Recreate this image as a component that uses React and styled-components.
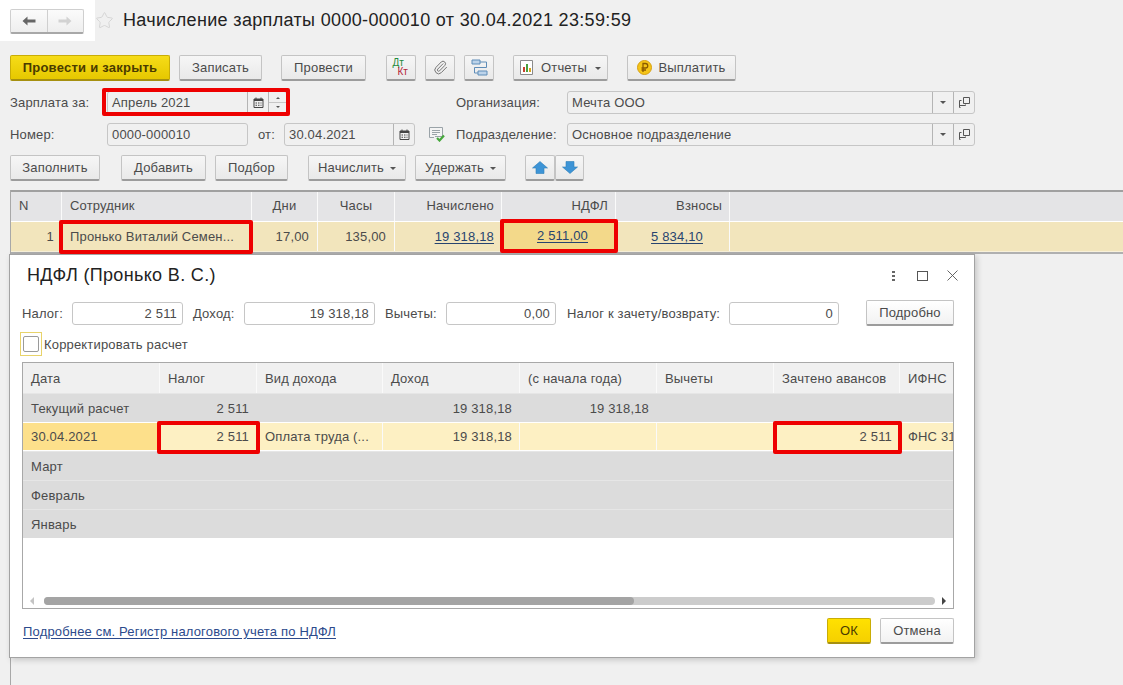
import React from 'react'
import styled, { createGlobalStyle, css } from 'styled-components'
import { Paperclip, Star } from 'lucide-react'

const Global = createGlobalStyle`
  html, body { margin: 0; padding: 0; height: 100%; background: #f0f0f0; overflow: hidden; }
  #root { height: 100%; }
  * { box-sizing: border-box; }
`

const redFrame = css`
  position: relative;
  &::after {
    content: '';
    position: absolute;
    top: ${p => p.$frame[0]}px;
    right: ${p => p.$frame[1]}px;
    bottom: ${p => p.$frame[2]}px;
    left: ${p => p.$frame[3]}px;
    border: 4px solid #ee0000;
    border-radius: 2px;
    pointer-events: none;
    z-index: 3;
  }
`

const Page = styled.div`
  position: relative;
  width: 1123px;
  height: 685px;
  display: flex;
  flex-direction: column;
  background: #f0f0f0;
  font-family: "Liberation Sans", Arial, sans-serif;
  font-size: 13px;
  letter-spacing: 0.17px;
  color: #4b4b4b;
  overflow: hidden;
`

const Head = styled.div`
  height: 41px;
  display: flex;
  align-items: center;
  margin-bottom: 14px;
`

const NavPatch = styled.div`
  width: 95px;
  height: 41px;
  background: #fff;
  padding: 9px 0 0 10px;
  flex: none;
`

const NavGroup = styled.div`
  display: flex;
  width: 74px;
  height: 25px;
  border: 1px solid #cfcfcf;
  border-bottom: 2px solid #a8a8a8;
  border-radius: 2px;
  background: linear-gradient(#fbfbfb, #eeeeee);
`

const NavBtn = styled.div`
  flex: 1;
  display: flex;
  align-items: center;
  justify-content: center;
  & + & { border-left: 1px solid #cfcfcf; }
`

const Title = styled.div`
  font-size: 18px;
  letter-spacing: 0.34px;
  color: #222;
  margin-left: 9px;
  margin-top: -1px;
`

const Toolbar = styled.div`
  display: flex;
  align-items: flex-start;
  padding-left: 10px;
  height: 26px;
  margin-top: ${p => p.$mt || 0}px;
`

const Btn = styled.div`
  width: ${p => p.$w}px;
  height: 26px;
  margin-left: ${p => p.$ml || 0}px;
  flex: none;
  display: flex;
  align-items: center;
  justify-content: center;
  gap: ${p => p.$gap || 0}px;
  padding-bottom: 1px;
  white-space: nowrap;
  border: 1px solid #c4c4c4;
  border-bottom: 2px solid #9c9c9c;
  border-radius: 2px;
  background: linear-gradient(#f6f6f6, #e9e9e9);
`

const PrimaryBtn = styled(Btn)`
  font-weight: 700;
  color: #4a3b00;
  letter-spacing: 0.24px;
  border: 1px solid #c9ad06;
  border-bottom: 2px solid #a69010;
  background: linear-gradient(#f6dc18, #e6c800);
`

const WhiteBtn = styled(Btn)`
  background: linear-gradient(#ffffff, #f2f2f2);
`

const OkBtn = styled(Btn)`
  color: #4a3b00;
  border: 1px solid #c9ad06;
  border-bottom: 2px solid #a69010;
  background: linear-gradient(#ffe100, #f5d000);
`

const FormRow = styled.div`
  display: flex;
  align-items: center;
  height: 22px;
  padding-left: 10px;
  margin-top: ${p => p.$mt || 0}px;
`

const Label = styled.div`
  width: ${p => p.$w}px;
  margin-left: ${p => p.$ml || 0}px;
  flex: none;
  white-space: nowrap;
`

const Field = styled.div`
  width: ${p => p.$w}px;
  height: 23px;
  flex: none;
  display: flex;
  align-items: stretch;
  border: 1px solid #c6c6c6;
  border-radius: 3px;
  background: ${p => (p.$white ? '#fff' : 'transparent')};
  ${p => p.$frame && redFrame}
`

const FieldText = styled.div`
  flex: 1;
  min-width: 0;
  padding: 0 ${p => (p.$right ? 5 : 4)}px;
  line-height: 21px;
  white-space: nowrap;
  text-align: ${p => (p.$right ? 'right' : 'left')};
`

const FieldBtn = styled.div`
  width: ${p => p.$w || 21}px;
  flex: none;
  display: flex;
  align-items: center;
  justify-content: center;
  border-left: 1px solid #b4b4b4;
`

const SpinBtn = styled(FieldBtn)`
  flex-direction: column;
  gap: 3px;
  width: 18px;
`

const SpinLine = styled.span`
  width: 100%;
  height: 1px;
  background: #c6c6c6;
`

const Caret = styled.span`
  width: 0;
  height: 0;
  border-left: 3px solid transparent;
  border-right: 3px solid transparent;
  border-${p => (p.$up ? 'bottom' : 'top')}: 3px solid #555;
`

const SpinCaret = styled(Caret)`
  border-left-width: 2px;
  border-right-width: 2px;
  border-${p => (p.$up ? 'bottom' : 'top')}-width: 2px;
`

const BtnCaret = styled(Caret)`
  margin-top: 2px;
`

const DocIcon = styled.div`
  width: 16px;
  margin: 0 11px 0 14px;
  flex: none;
  display: flex;
`

const Grid = styled.div`
  display: grid;
  grid-template-columns: ${p => p.$cols};
`

const Doc = styled.div`
  flex: 1;
  margin: 9px 0 0 10px;
  border-left: 1px solid #a8a8a8;
`

const DocTable = styled.div`
  border-top: 2px solid #a0a0a0;
  border-bottom: 2px solid #b0b0b0;
`

const DocHead = styled(Grid)`
  height: 30px;
  background: #e4e4e6;
  border-bottom: 1px solid #fff;
  & > div { padding-bottom: 2px; }
`

const DocRow = styled(Grid)`
  height: 30px;
  background: #f2e5bc;
  border-bottom: 1px solid #f8f1da;
  & > div { padding-bottom: 1px; }
`

const Cell = styled.div`
  display: flex;
  align-items: center;
  justify-content: ${p => (p.$center ? 'center' : p.$right ? 'flex-end' : 'flex-start')};
  padding-left: ${p => (p.$right || p.$center ? 0 : 8)}px;
  padding-right: ${p => (p.$center ? 0 : p.$pr || 7)}px;
  white-space: nowrap;
  overflow: ${p => (p.$frame ? 'visible' : 'hidden')};
  border-right: ${p => (p.$last ? 0 : '1px solid')} ${p => p.$line || '#fafafa'};
  ${p => p.$frame && redFrame}
`

const ActiveCell = styled(Cell)`
  background: #f3d98a;
  border-bottom: 2px solid #eeb544;
`

const DataLink = styled.span`
  color: #27446f;
  text-decoration: underline;
  text-underline-offset: 2px;
`

const Dialog = styled.div`
  position: absolute;
  z-index: 2;
  left: 9px;
  top: 254px;
  width: 966px;
  height: 404px;
  display: flex;
  flex-direction: column;
  background: #fff;
  border: 1px solid #a3a3a3;
  box-shadow: 2px 2px 6px rgba(0, 0, 0, 0.18);
`

const DialogHead = styled.div`
  height: 45px;
  display: flex;
  align-items: center;
  padding: 0 16px 0 17px;
`

const DialogTitle = styled.div`
  flex: 1;
  font-size: 18px;
  letter-spacing: 0.34px;
  color: #222;
  margin-top: -4px;
`

const WindowIcons = styled.div`
  display: flex;
  align-items: center;
  margin-top: -4px;
`

const MoreIcon = styled.div`
  display: flex;
  flex-direction: column;
  gap: 2px;
  margin-right: 22px;
  & > i { width: 3px; height: 2px; background: #666; display: block; }
`

const MaxIcon = styled.div`
  width: 11px;
  height: 10px;
  border: 1px solid #555;
  margin-right: 19px;
`

const DialogRow = styled.div`
  display: flex;
  align-items: center;
  height: 26px;
  padding-left: 12px;
`

const CheckRow = styled.div`
  display: flex;
  align-items: center;
  height: 24px;
  margin: 6px 0 0 10px;
`

const CheckFocus = styled.div`
  width: 22px;
  height: 24px;
  border: 1px solid #e8d36a;
  padding: 3px 2px;
  margin-right: 2px;
`

const CheckBox = styled.div`
  width: 16px;
  height: 16px;
  border: 1px solid #9a9a9a;
  border-radius: 2px;
  background: #fff;
`

const SubTable = styled.div`
  margin: 6px 20px 0 12px;
  height: 247px;
  display: flex;
  flex-direction: column;
  border: 1px solid #a8a8a8;
`

const SubHead = styled(Grid)`
  height: 30px;
  background: #f0f0f0;
`

const SubRow = styled(Grid)`
  height: 29px;
  background: ${p => (p.$active ? '#fdf0c3' : '#dcdcdc')};
  border-top: 1px solid ${p => (p.$active ? '#fff' : '#e6e6e6')};
  border-bottom: ${p => (p.$active ? '1px solid #fff' : 0)};
`

const FirstCell = styled(Cell)`
  background: #fde08b;
`

const ScrollBar = styled.div`
  margin-top: auto;
  height: 14px;
  display: flex;
  align-items: center;
  padding: 0 7px;
`

const ScrollArrow = styled.span`
  width: 0;
  height: 0;
  border-top: 4px solid transparent;
  border-bottom: 4px solid transparent;
  ${p => (p.$left ? 'border-right: 4px solid #c4c4c4;' : 'border-left: 4px solid #444;')}
`

const ScrollTrack = styled.div`
  flex: 1;
  height: 8px;
  margin: 0 7px 0 10px;
  border-radius: 4px;
  background: #cccccc;
  display: flex;
`

const ScrollThumb = styled.div`
  width: 590px;
  border-radius: 4px;
  background: #a4a4a4;
`

const DialogFoot = styled.div`
  flex: 1;
  display: flex;
  align-items: flex-start;
  padding: 9px 20px 0 13px;
`

const FootLink = styled.div`
  flex: 1;
  margin-top: 6px;
  color: #2c4a8c;
  text-decoration: underline;
  text-underline-offset: 2px;
`

const DtKt = styled.span`
  width: 17px;
  height: 18px;
  font-size: 10px;
  letter-spacing: 0;
  line-height: 9px;
  color: #1f8a3d;
  & > b {
    display: block;
    margin-left: 5px;
    color: #b5263a;
    font-weight: 400;
  }
`

const BackIcon = ({ color, flip }) => (
  <svg width="14" height="10" viewBox="0 0 14 10" style={{ transform: flip ? 'scaleX(-1)' : 'none' }}>
    <path d="M0.5 5 L5.5 0.5 V3.5 H13.5 V6.5 H5.5 V9.5 Z" fill={color} />
  </svg>
)

const CloseIcon = () => (
  <svg width="11" height="11" viewBox="0 0 11 11">
    <path d="M0.5 0.5 L10.5 10.5 M10.5 0.5 L0.5 10.5" stroke="#555" strokeWidth="0.9" />
  </svg>
)

const CalendarIcon = () => (
  <svg width="11" height="11" viewBox="0 0 11 11">
    <path d="M1 2 H10 V10.5 H1 Z" fill="none" stroke="#444" />
    <path d="M1 2 H10 V4 H1 Z" fill="#444" />
    <path d="M3 0.5 V2.5 M8 0.5 V2.5" stroke="#444" />
    <path d="M2.5 5.5 h1.5 v1 h-1.5 z M5 5.5 h1.5 v1 h-1.5 z M7.5 5.5 h1 v1 h-1 z M2.5 7.8 h1.5 v1 h-1.5 z M5 7.8 h1.5 v1 h-1.5 z M7.5 7.8 h1 v1 h-1 z" fill="#444" />
  </svg>
)

const OpenIcon = () => (
  <svg width="11" height="11" viewBox="0 0 11 11">
    <path d="M4.5 0.5 H10.5 V6.5 H4.5 Z" fill="none" stroke="#555" />
    <path d="M2.5 3.5 H0.5 V10.5 H1.5 M0.5 8.5 H6.5 V7.5" fill="none" stroke="#555" />
  </svg>
)

const StructureIcon = () => (
  <svg width="17" height="17" viewBox="0 0 17 17">
    <path d="M9 3 H15.5 V8.5 H3.5 V14 H7" fill="none" stroke="#5f8db8" />
    <path d="M1 1 H9 V5 H1 Z M7 12 H16 V16 H7 Z" fill="#bcd3ea" stroke="#5f8db8" />
  </svg>
)

const ReportIcon = () => (
  <svg width="13" height="15" viewBox="0 0 13 15">
    <path d="M0.5 0.5 H12.5 V14.5 H0.5 Z" fill="#fff" stroke="#8a8a8a" />
    <path d="M3 7 h2 v5 h-2 z" fill="#c8402f" />
    <path d="M6 4 h2 v8 h-2 z" fill="#4aa03f" />
    <path d="M9 8 h2 v4 h-2 z" fill="#d9a520" />
  </svg>
)

const CoinIcon = () => (
  <svg width="15" height="15" viewBox="0 0 15 15">
    <circle cx="7.5" cy="7.5" r="7" fill="#f5c518" stroke="#d69f10" />
    <path d="M6 12 V3.5 H8.5 A2.2 2.2 0 0 1 8.5 8 H4.5 M4.5 10 H9" fill="none" stroke="#8a5a00" strokeWidth="1.3" />
  </svg>
)

const DocCheckIcon = () => (
  <svg width="16" height="16" viewBox="0 0 16 16">
    <path d="M0.5 1.5 H13.5 V10.5 H6 M0.5 1.5 V11.5 H5" fill="#f4f4f4" stroke="#9aa3a8" />
    <path d="M3 4.5 H11 M3 6.5 H11 M3 8.5 H8" stroke="#9aa3a8" />
    <path d="M8 12 L10.5 14.5 L15 9.5" fill="none" stroke="#46a83c" strokeWidth="2.2" />
  </svg>
)

const BlueArrow = ({ down }) => (
  <svg width="16" height="13" viewBox="0 0 16 13" style={{ transform: down ? 'scaleY(-1)' : 'none' }}>
    <path d="M8 0.5 L15.5 7 H12 V12.5 H4 V7 H0.5 Z" fill="#3d94d6" stroke="#2f7fb8" strokeWidth="0.6" />
  </svg>
)

const docCols = '51px 190px 66px 77px 107px 114px 114px 1fr'
const subCols = '137px 97px 126px 137px 137px 117px 126px 1fr'

export default function App() {
  return (
    <Page>
      <Global />
      <Head>
        <NavPatch>
          <NavGroup>
            <NavBtn><BackIcon color="#666" /></NavBtn>
            <NavBtn><BackIcon color="#d2d2d2" flip /></NavBtn>
          </NavGroup>
        </NavPatch>
        <Star size={19} color="#d4d4d4" strokeWidth={1.2} />
        <Title>Начисление зарплаты 0000-000010 от 30.04.2021 23:59:59</Title>
      </Head>

      <Toolbar>
        <PrimaryBtn $w={160}>Провести и закрыть</PrimaryBtn>
        <Btn $w={83} $ml={9}>Записать</Btn>
        <Btn $w={85} $ml={19}>Провести</Btn>
        <Btn $w={30} $ml={20}><DtKt>Дт<b>Кт</b></DtKt></Btn>
        <Btn $w={30} $ml={9}><Paperclip size={15} color="#777" strokeWidth={1.6} /></Btn>
        <Btn $w={30} $ml={9}><StructureIcon /></Btn>
        <Btn $w={95} $ml={19} $gap={8}><ReportIcon />Отчеты<BtnCaret /></Btn>
        <Btn $w={109} $ml={19} $gap={6}><CoinIcon />Выплатить</Btn>
      </Toolbar>

      <FormRow $mt={10}>
        <Label $w={97}>Зарплата за:</Label>
        <Field $w={180} $frame={[-4, -4, -3, -6]}>
          <FieldText>Апрель 2021</FieldText>
          <FieldBtn><CalendarIcon /></FieldBtn>
          <SpinBtn><SpinCaret $up /><SpinLine /><SpinCaret /></SpinBtn>
        </Field>
        <Label $w={111} $ml={169}>Организация:</Label>
        <Field $w={408}>
          <FieldText>Мечта ООО</FieldText>
          <FieldBtn><Caret /></FieldBtn>
          <FieldBtn><OpenIcon /></FieldBtn>
        </Field>
      </FormRow>

      <FormRow $mt={10}>
        <Label $w={97}>Номер:</Label>
        <Field $w={141}><FieldText>0000-000010</FieldText></Field>
        <Label $w={26} $ml={10}>от:</Label>
        <Field $w={131}>
          <FieldText>30.04.2021</FieldText>
          <FieldBtn><CalendarIcon /></FieldBtn>
        </Field>
        <DocIcon><DocCheckIcon /></DocIcon>
        <Label $w={111}>Подразделение:</Label>
        <Field $w={408}>
          <FieldText>Основное подразделение</FieldText>
          <FieldBtn><Caret /></FieldBtn>
          <FieldBtn><OpenIcon /></FieldBtn>
        </Field>
      </FormRow>

      <Toolbar $mt={10}>
        <Btn $w={90}>Заполнить</Btn>
        <Btn $w={85} $ml={21}>Добавить</Btn>
        <Btn $w={73} $ml={9}>Подбор</Btn>
        <Btn $w={98} $ml={20} $gap={6}>Начислить<BtnCaret /></Btn>
        <Btn $w={91} $ml={9} $gap={6}>Удержать<BtnCaret /></Btn>
        <Btn $w={30} $ml={19}><BlueArrow /></Btn>
        <Btn $w={29}><BlueArrow down /></Btn>
      </Toolbar>

      <Doc>
        <DocTable>
          <DocHead $cols={docCols}>
            <Cell>N</Cell>
            <Cell>Сотрудник</Cell>
            <Cell $center>Дни</Cell>
            <Cell $center>Часы</Cell>
            <Cell $right>Начислено</Cell>
            <Cell $right>НДФЛ</Cell>
            <Cell $right>Взносы</Cell>
            <Cell $last />
          </DocHead>
          <DocRow $cols={docCols}>
            <Cell $right>1</Cell>
            <Cell $frame={[-2, -2, -3, -3]}>Пронько Виталий Семен...</Cell>
            <Cell $right $pr={8}>17,00</Cell>
            <Cell $right $pr={8}>135,00</Cell>
            <Cell $right><DataLink>19 318,18</DataLink></Cell>
            <ActiveCell $right $pr={27} $frame={[-3, -3, -4, -2]}><DataLink>2 511,00</DataLink></ActiveCell>
            <Cell $right $pr={26}><DataLink>5 834,10</DataLink></Cell>
            <Cell $last />
          </DocRow>
        </DocTable>
      </Doc>

      <Dialog>
        <DialogHead>
          <DialogTitle>НДФЛ (Пронько В. С.)</DialogTitle>
          <WindowIcons>
            <MoreIcon><i /><i /><i /></MoreIcon>
            <MaxIcon />
            <CloseIcon />
          </WindowIcons>
        </DialogHead>

        <DialogRow>
          <Label $w={50}>Налог:</Label>
          <Field $w={111} $white><FieldText $right>2 511</FieldText></Field>
          <Label $w={51} $ml={10}>Доход:</Label>
          <Field $w={131} $white><FieldText $right>19 318,18</FieldText></Field>
          <Label $w={61} $ml={10}>Вычеты:</Label>
          <Field $w={110} $white><FieldText $right>0,00</FieldText></Field>
          <Label $w={162} $ml={11}>Налог к зачету/возврату:</Label>
          <Field $w={110} $white><FieldText $right>0</FieldText></Field>
          <WhiteBtn $w={88} $ml={27}>Подробно</WhiteBtn>
        </DialogRow>

        <CheckRow>
          <CheckFocus><CheckBox /></CheckFocus>
          Корректировать расчет
        </CheckRow>

        <SubTable>
          <SubHead $cols={subCols}>
            <Cell>Дата</Cell>
            <Cell>Налог</Cell>
            <Cell>Вид дохода</Cell>
            <Cell>Доход</Cell>
            <Cell>(с начала года)</Cell>
            <Cell>Вычеты</Cell>
            <Cell>Зачтено авансов</Cell>
            <Cell $last>ИФНС</Cell>
          </SubHead>
          <SubRow $cols={subCols}>
            <Cell $line="#dcdcdc">Текущий расчет</Cell>
            <Cell $right $line="#dcdcdc">2 511</Cell>
            <Cell $line="#dcdcdc" />
            <Cell $right $line="#dcdcdc">19 318,18</Cell>
            <Cell $right $line="#dcdcdc">19 318,18</Cell>
            <Cell $line="#dcdcdc" />
            <Cell $line="#dcdcdc" />
            <Cell $last />
          </SubRow>
          <SubRow $active $cols={subCols}>
            <FirstCell $line="#fde08b">30.04.2021</FirstCell>
            <Cell $right $frame={[-2, -4, -4, -3]}>2 511</Cell>
            <Cell>Оплата труда (...</Cell>
            <Cell $right>19 318,18</Cell>
            <Cell />
            <Cell />
            <Cell $right $frame={[-2, -3, -4, -1]}>2 511</Cell>
            <Cell $last $pr={1}>ФНС 31</Cell>
          </SubRow>
          {['Март', 'Февраль', 'Январь'].map(name => (
            <SubRow key={name} $cols={subCols}>
              <Cell $line="#dcdcdc">{name}</Cell>
            </SubRow>
          ))}
          <ScrollBar>
            <ScrollArrow $left />
            <ScrollTrack><ScrollThumb /></ScrollTrack>
            <ScrollArrow />
          </ScrollBar>
        </SubTable>

        <DialogFoot>
          <FootLink>Подробнее см. Регистр налогового учета по НДФЛ</FootLink>
          <OkBtn $w={44}>ОК</OkBtn>
          <WhiteBtn $w={74} $ml={9}>Отмена</WhiteBtn>
        </DialogFoot>
      </Dialog>
    </Page>
  )
}
